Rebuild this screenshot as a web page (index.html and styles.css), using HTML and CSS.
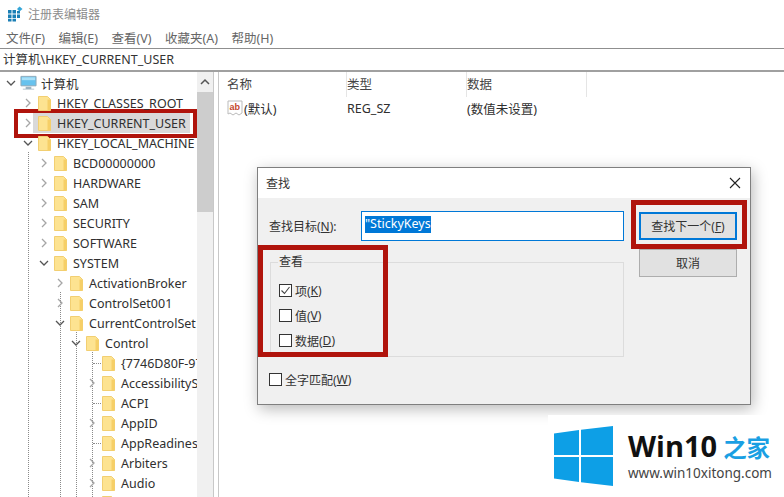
FILE: index.html
```html
<!DOCTYPE html>
<html lang="zh-CN">
<head>
<meta charset="utf-8">
<title>注册表编辑器</title>
<link rel="stylesheet" href="styles.css">
</head>
<body>
<svg class="defs" width="0" height="0">
  <defs>
    <symbol id="folder" viewBox="0 0 13 15">
      <path d="M.5.5H9.5L12.5 3.5V14.5H.5Z" fill="#fde391" stroke="#f2cf72"/>
      <path d="M9.5 3.5H12.5V14.5H9.5Z" fill="#f6cf67"/>
    </symbol>
    <symbol id="open" viewBox="0 0 10 10"><path d="M3 1 7 5 3 9" fill="none" stroke="#a6a6a6" stroke-width="1.3"/></symbol>
    <symbol id="down" viewBox="0 0 10 10"><path d="M1 3 5 7 9 3" fill="none" stroke="#555" stroke-width="1.3"/></symbol>
  </defs>
</svg>
<div class="window">
  <header class="titlebar">
    <svg class="appicon" width="16" height="16" viewBox="0 0 16 16">
      <path d="M1 4H4.500V7.500H1ZM5.500 4H9V7.500H5.500ZM10 5H13V7.500H10ZM1 8.500H4.500V12H1ZM5.500 8.500H9V12H5.500ZM10 8.500H13V12H10ZM1 12.800H4.500V15.500H1ZM5.500 12.800H9V15.500H5.500Z" fill="#1b7fb5"/>
      <path d="M12.500 0.500 15.500 3 12.500 5.500 10 3Z" fill="#35a6d8"/>
    </svg>
    <span>注册表编辑器</span>
  </header>
  <nav class="menubar">
    <span>文件(F)</span><span>编辑(E)</span><span>查看(V)</span><span>收藏夹(A)</span><span>帮助(H)</span>
  </nav>
  <div class="address">计算机\HKEY_CURRENT_USER</div>
  <main class="panes">
    <section class="tree">
      <div class="treelist">
        <div class="row l0"><svg class="chev"><use href="#down"/></svg>
          <svg class="computer" width="17" height="16" viewBox="0 0 18 16"><path d="M1 1H17V11H1Z" fill="#67c2ee" stroke="#8fa9b8"/><path d="M2 2H16V5H2Z" fill="#a8e0f8"/><path d="M6 12H12V14H15V15H3V14H6Z" fill="#9db4c2"/></svg>
          <span>计算机</span></div>
        <div class="row l1"><svg class="chev"><use href="#open"/></svg><svg class="fold"><use href="#folder"/></svg><span>HKEY_CLASSES_ROOT</span></div>
        <div class="row l1 selected"><svg class="chev"><use href="#open"/></svg><svg class="fold"><use href="#folder"/></svg><span>HKEY_CURRENT_USER</span></div>
        <div class="row l1"><svg class="chev"><use href="#down"/></svg><svg class="fold"><use href="#folder"/></svg><span>HKEY_LOCAL_MACHINE</span></div>
        <div class="row l2"><svg class="chev"><use href="#open"/></svg><svg class="fold"><use href="#folder"/></svg><span>BCD00000000</span></div>
        <div class="row l2"><svg class="chev"><use href="#open"/></svg><svg class="fold"><use href="#folder"/></svg><span>HARDWARE</span></div>
        <div class="row l2"><svg class="chev"><use href="#open"/></svg><svg class="fold"><use href="#folder"/></svg><span>SAM</span></div>
        <div class="row l2"><svg class="chev"><use href="#open"/></svg><svg class="fold"><use href="#folder"/></svg><span>SECURITY</span></div>
        <div class="row l2"><svg class="chev"><use href="#open"/></svg><svg class="fold"><use href="#folder"/></svg><span>SOFTWARE</span></div>
        <div class="row l2"><svg class="chev"><use href="#down"/></svg><svg class="fold"><use href="#folder"/></svg><span>SYSTEM</span></div>
        <div class="row l3"><svg class="chev"><use href="#open"/></svg><svg class="fold"><use href="#folder"/></svg><span>ActivationBroker</span></div>
        <div class="row l3"><svg class="chev"><use href="#open"/></svg><svg class="fold"><use href="#folder"/></svg><span>ControlSet001</span></div>
        <div class="row l3"><svg class="chev"><use href="#down"/></svg><svg class="fold"><use href="#folder"/></svg><span>CurrentControlSet</span></div>
        <div class="row l4"><svg class="chev"><use href="#down"/></svg><svg class="fold"><use href="#folder"/></svg><span>Control</span></div>
        <div class="row l5 leaf"><i class="chev"></i><svg class="fold"><use href="#folder"/></svg><span>{7746D80F-97E0-4E26-9543-26B41FC22F79}</span></div>
        <div class="row l5"><svg class="chev"><use href="#open"/></svg><svg class="fold"><use href="#folder"/></svg><span>AccessibilitySettings</span></div>
        <div class="row l5 leaf"><i class="chev"></i><svg class="fold"><use href="#folder"/></svg><span>ACPI</span></div>
        <div class="row l5"><svg class="chev"><use href="#open"/></svg><svg class="fold"><use href="#folder"/></svg><span>AppID</span></div>
        <div class="row l5 leaf"><i class="chev"></i><svg class="fold"><use href="#folder"/></svg><span>AppReadiness</span></div>
        <div class="row l5"><svg class="chev"><use href="#open"/></svg><svg class="fold"><use href="#folder"/></svg><span>Arbiters</span></div>
        <div class="row l5"><svg class="chev"><use href="#open"/></svg><svg class="fold"><use href="#folder"/></svg><span>Audio</span></div>
        <div class="row l5"><svg class="chev"><use href="#open"/></svg><svg class="fold"><use href="#folder"/></svg><span>BackupRestore</span></div>
      </div>
      <i class="guide g1"></i><i class="guide g3"></i><i class="guide g4"></i><i class="guide g5"></i>
      <div class="scrollbar">
        <svg class="up" width="16" height="16" viewBox="0 0 16 16"><path d="M4 10 8 6 12 10" fill="none" stroke="#555" stroke-width="1.500"/></svg>
        <div class="thumb"></div>
      </div>
    </section>
    <section class="list">
      <div class="listhead"><span>名称</span><span>类型</span><span>数据</span></div>
      <div class="listrow">
        <span class="namecell">
          <svg width="16" height="16" viewBox="0 0 16 16"><path d="M1 1H15V13L12 15 9 13 6 15 3 13 1 14Z" fill="#fff" stroke="#bbb"/><text x="2.500" y="10" class="abtext">ab</text></svg>
          (默认)
        </span>
        <span>REG_SZ</span>
        <span>(数值未设置)</span>
      </div>
    </section>
  </main>
</div>

<div class="dialog">
  <div class="dlgtitle">
    <span>查找</span>
    <svg width="12" height="12" viewBox="0 0 12 12"><path d="M1 1 11 11M11 1 1 11" stroke="#222" stroke-width="1.100"/></svg>
  </div>
  <div class="dlgbody">
    <div class="dlgmain">
      <div class="target">
        <label>查找目标(<u>N</u>):</label>
        <div class="input"><span class="sel">"StickyKeys</span></div>
      </div>
      <fieldset class="group">
        <legend>查看</legend>
        <div class="check"><i class="box on"><svg width="11" height="11" viewBox="0 0 11 11"><path d="M1.500 5.500 4.500 8.500 9.500 2" fill="none" stroke="#444" stroke-width="1.100"/></svg></i>项(<u>K</u>)</div>
        <div class="check"><i class="box"></i>值(<u>V</u>)</div>
        <div class="check"><i class="box"></i>数据(<u>D</u>)</div>
      </fieldset>
      <div class="check whole"><i class="box"></i>全字匹配(<u>W</u>)</div>
    </div>
    <div class="dlgbtns">
      <div class="btn default">查找下一个(<u>F</u>)</div>
      <div class="btn">取消</div>
    </div>
  </div>
</div>

<div class="mark m1"></div>
<div class="mark m2"></div>
<div class="mark m3"></div>

<aside class="brand">
  <svg width="60" height="60" viewBox="0 0 60 60"><path d="M0 7.500 25 4V29H0ZM27 3.700 59 0V29H27ZM0 31H25V56L0 52.500ZM27 31H59V60L27 56.300Z" fill="#0d9fe6"/></svg>
  <div class="brandtext">
    <div class="brandname"><b>Win10</b><em>之家</em></div>
    <div class="brandurl">www.win10xitong.com</div>
  </div>
</aside>
</body>
</html>
```

FILE: styles.css
```css
* { box-sizing: border-box; }
html, body { margin: 0; height: 100%; }
body {
  width: 784px; height: 497px; overflow: hidden; position: relative; background: #fff;
  font-family: "Noto Sans", "Noto Sans CJK SC", sans-serif; font-size: 12px; color: #2b2b2b;
}
.defs { position: absolute; }
.window { display: flex; flex-direction: column; height: 497px; }
.titlebar { height: 27px; display: flex; align-items: center; gap: 5px; padding-left: 7px; color: #8c8c8c; font-size: 12px; }
.appicon { flex: none; }
.menubar { height: 22px; display: flex; gap: 13.5px; padding-left: 6px; align-items: center; color: #666; font-size: 12.5px; border-bottom: 1px solid #8f8f8f; }
.address { height: 23px; line-height: 22px; padding-left: 3px; border-bottom: 2px solid #a0a0a0; color: #333; font-size: 12.5px; }
.panes { flex: 1; display: flex; min-height: 0; font-size: 12.5px; }
.tree { width: 214px; position: relative; overflow: hidden; display: flex; flex: none; border-right: 1px solid #c8c8c8; }
.treelist { width: 197px; padding-top: 1px; flex: none; overflow: hidden; }
.row { height: 20px; display: flex; align-items: center; white-space: nowrap; position: relative; z-index: 1; color: #2f2f2f; }
.row.l0 { padding-left: 6px; }
.l1 { padding-left: 23px; }
.l2 { padding-left: 39px; }
.l3 { padding-left: 55px; }
.l4 { padding-left: 71px; }
.l5 { padding-left: 87px; }
.chev { width: 10px; height: 10px; flex: none; margin-right: 5px; }
.fold { width: 13px; height: 15px; flex: none; margin-right: 6px; }
.computer { flex: none; margin-right: 4px; margin-left: -1px; }
.row.selected { background: linear-gradient(to right, transparent 33px, #d9d9d9 33px, #d9d9d9 190px, transparent 190px); }
.leaf::before { content: ""; position: absolute; left: 93px; top: 10px; width: 8px; border-top: 1px dotted #8a8a8a; }
.guide { position: absolute; border-left: 1px dotted #8a8a8a; bottom: 0; width: 0; }
.g1 { left: 28px; top: 80px; }
.g3 { left: 60px; top: 220px; }
.g4 { left: 76px; top: 260px; }
.g5 { left: 92px; top: 280px; }
.scrollbar { width: 16px; margin-left: 0; background: #f0f0f0; flex: none; display: flex; flex-direction: column; }
.up { flex: none; margin-top: 2px; }
.thumb { height: 120px; margin-top: 2px; background: #cdcdcd; }
.list { flex: 1; margin-left: 4px; border-left: 1px solid #c8c8c8; }
.listhead { height: 26px; display: grid; grid-template-columns: 120px 120px 120px; padding-left: 8px; color: #444; }
.listhead span { height: 25px; line-height: 26px; border-right: 1px solid #e5e5e5; }
.listrow { display: grid; grid-template-columns: 120px 120px 1fr; padding-left: 8px; height: 20px; align-items: center; color: #2f2f2f; }
.namecell { display: flex; align-items: center; gap: 1px; }
.abtext { font-size: 9px; font-weight: 700; fill: #c4472b; font-family: "Liberation Sans", sans-serif; }

.dialog {
  position: absolute; left: 257px; top: 167px; width: 494px; height: 238px; background: #f0f0f0;
  border: 1px solid #7f7f7f; box-shadow: 2px 4px 14px rgba(0,0,0,.28); display: flex; flex-direction: column;
}
.dlgtitle { height: 30px; background: #fff; flex: none; display: flex; justify-content: space-between; align-items: center; padding: 0 9px 0 8px; color: #333; }
.dlgbody { flex: 1; display: flex; padding: 13px 13px 0 11px; gap: 15px; }
.dlgmain { width: 355px; display: flex; flex-direction: column; flex: none; }
.target { display: flex; align-items: center; height: 30px; flex: none; }
.target label { width: 92px; color: #333; }
.input { width: 263px; height: 30px; background: #fff; border: 1px solid #0078d7; padding: 3px 0 0 3px; }
.sel { display: inline-block; background: #0078d7; color: #fff; height: 17px; line-height: 16px; font-size: 12.500px; }
.group { margin: 13px 0 0 1px; padding: 8px 0 0 8px; width: 354px; height: 103px; border: 1px solid #dcdcdc; min-width: 0; }
.group legend { padding: 0 1px; margin-left: -1px; line-height: 16px; color: #333; }
.check { display: flex; align-items: center; height: 25px; color: #333; }
.box { width: 13px; height: 13px; border: 1px solid #333; background: #fff; margin-right: 3px; flex: none; display: flex; }
.whole { margin-top: 10px; }
.dlgbtns { display: flex; flex-direction: column; gap: 9px; width: 98px; padding-top: 1px; }
.btn { height: 28px; background: #e1e1e1; border: 1px solid #adadad; display: flex; align-items: center; justify-content: center; color: #333; white-space: pre; }
.btn.default { border: 2px solid #0078d7; }

.mark { position: absolute; border: 5px solid #b0140c; }
.m1 { left: 14px; top: 109px; width: 183px; height: 29px; border-width: 4px; }
.m2 { left: 258px; top: 245px; width: 130px; height: 112px; }
.m3 { left: 631px; top: 200px; width: 116px; height: 49px; }

.brand { position: absolute; left: 548px; top: 415px; width: 236px; height: 82px; background: #fff; display: flex; padding: 11px 0 0 6px; gap: 14px; }
.brandtext { display: flex; flex-direction: column; }
.brandname { display: flex; align-items: baseline; gap: 6px; height: 36px; line-height: 36px; margin-top: 2px; }
.brandname b { font-family: "Open Sans", sans-serif; font-size: 29px; font-weight: 700; color: #111; }
.brandname em { font-style: normal; font-size: 23.500px; font-weight: 700; color: #1a9fe3; font-family: "Noto Sans CJK SC", sans-serif; }
.brandurl { font-size: 13.500px; line-height: 16px; color: #444; margin-top: 1px; }
```
